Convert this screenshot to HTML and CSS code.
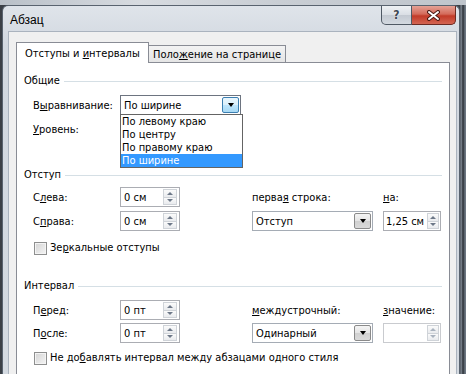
FILE: index.html
```html
<!DOCTYPE html>
<html lang="ru">
<head>
    <meta charset="UTF-8">
    <title>Абзац</title>
    <link rel="stylesheet" href="styles.css">
</head>
<body>
    <div class="desk-top"></div>

    <div class="window">
        <!-- Заголовок окна -->
        <div class="titlebar">
            <span class="title">Абзац</span>
            <span class="cap-help">?</span>
            <span class="cap-close"><svg width="13" height="11" viewBox="0 0 13 11"><path d="M2 2 L11 9 M11 2 L2 9" stroke="#4a1a14" stroke-width="4" stroke-linecap="round"/><path d="M2 2 L11 9 M11 2 L2 9" stroke="#ffffff" stroke-width="2" stroke-linecap="round"/></svg></span>
        </div>

        <div class="client">
            <div class="tabs">
                <div class="tab active">Отступы и <u>и</u>нтервалы</div>
                <div class="tab">Поло<u>ж</u>ение на странице</div>
            </div>

            <div class="panel">
                <!-- Общие -->
                <div class="group">
                    <div class="group-title">Общие</div>
                    <div class="rows">
                        <span class="lbl">В<u>ы</u>равнивание:</span>
                        <div class="combo focused">
                            <span>По ширине</span>
                            <div class="drop"><i class="arrow"></i></div>
                            <ul class="list">
                                <li>По левому краю</li>
                                <li>По центру</li>
                                <li>По правому краю</li>
                                <li class="sel">По ширине</li>
                            </ul>
                        </div>
                        <span class="lbl wide"><u>У</u>ровень:</span>
                    </div>
                </div>

                <!-- Отступ -->
                <div class="group indent">
                    <div class="group-title">Отступ</div>
                    <div class="rows">
                        <span class="lbl">С<u>л</u>ева:</span>
                        <div class="spin"><span>0 см</span><div class="spin-btns"><b class="up"></b><b class="down"></b></div></div>
                        <span class="lbl">перва<u>я</u> строка:</span>
                        <span class="lbl"><u>н</u>а:</span>

                        <span class="lbl">С<u>п</u>рава:</span>
                        <div class="spin"><span>0 см</span><div class="spin-btns"><b class="up"></b><b class="down"></b></div></div>
                        <div class="combo"><span>Отступ</span><div class="drop"><i class="arrow"></i></div></div>
                        <div class="spin narrow"><span>1,25 см</span><div class="spin-btns"><b class="up"></b><b class="down"></b></div></div>
                    </div>
                    <div class="check"><span class="box"></span><span>Зе<u>р</u>кальные отступы</span></div>
                </div>

                <!-- Интервал -->
                <div class="group interval">
                    <div class="group-title">Интервал</div>
                    <div class="rows">
                        <span class="lbl">П<u>е</u>ред:</span>
                        <div class="spin"><span>0 пт</span><div class="spin-btns"><b class="up"></b><b class="down"></b></div></div>
                        <span class="lbl"><u>м</u>еждустрочный:</span>
                        <span class="lbl"><u>з</u>начение:</span>

                        <span class="lbl">П<u>о</u>сле:</span>
                        <div class="spin"><span>0 пт</span><div class="spin-btns"><b class="up"></b><b class="down"></b></div></div>
                        <div class="combo"><span>Одинарный</span><div class="drop"><i class="arrow"></i></div></div>
                        <div class="spin narrow disabled"><span></span><div class="spin-btns"><b class="up"></b><b class="down"></b></div></div>
                    </div>
                    <div class="check"><span class="box"></span><span>Не до<u>б</u>авлять интервал между абзацами одного стиля</span></div>
                </div>
            </div>
        </div>
    </div>
</body>
</html>
```

FILE: styles.css
```css
body {
    margin: 0;
    width: 466px;
    height: 374px;
    overflow: hidden;
    background: linear-gradient(90deg, #3b4047 0, #3b4047 460px, #8a939e 461px, #2b3036 463px, #6c7681 465px);
    font-family: "DejaVu Sans Condensed", "DejaVu Sans", sans-serif;
    font-stretch: condensed;
    font-size: 11px;
    color: #000;
}

.desk-top {
    height: 5px;
    background: linear-gradient(90deg, #b9c0c8, #d7dbe0 30%, #c9ced4 60%, #bfc5cc);
}

.window {
    margin-left: 2px;
    width: 458px;
    height: 369px;
    box-sizing: border-box;
    border: 1px solid #59636f;
    border-bottom: none;
    border-radius: 6px 6px 0 0;
    background: linear-gradient(#dfe4ea, #d2d8e0 40px, #d4dae1);
    display: flex;
    flex-direction: column;
}

.titlebar {
    height: 25px;
    display: flex;
    align-items: flex-start;
    padding: 0 3px 0 7px;
}

.title {
    margin-top: 7px;
    margin-right: auto;
    line-height: 14px;
    font-family: "Liberation Sans", sans-serif;
    font-size: 12px;
}

.cap-help,
.cap-close {
    flex: none;
    box-sizing: border-box;
    height: 19px;
    border: 1px solid #4f5964;
    border-top: none;
    display: flex;
    align-items: center;
    justify-content: center;
}

.cap-help {
    width: 31px;
    border-radius: 0 0 0 5px;
    background: linear-gradient(#eef1f4, #d9dee4 50%, #c3c9d1 51%, #d3d9e0);
    font-family: "DejaVu Sans", sans-serif;
    font-weight: bold;
    font-size: 12px;
    color: #3d4650;
    text-shadow: 0 0 2px #fff;
}

.cap-close {
    width: 44px;
    border-left: none;
    border-color: #6b2a22;
    border-radius: 0 0 5px 0;
    background: #c94a39 linear-gradient(#e4a195, #d46a5a 45%, #c23a28 55%, #d36552);
}

.client {
    flex: 1;
    margin: 0 2px 0 5px;
    border: 1px solid #aab3be;
    border-bottom: none;
    background: #f0f0f0;
    padding: 10px 6px 0 7px;
    display: flex;
    flex-direction: column;
}

.tabs {
    display: flex;
    align-items: flex-end;
    height: 20px;
}

.tab {
    box-sizing: border-box;
    border: 1px solid #898c95;
    border-bottom: none;
    line-height: 15px;
    white-space: nowrap;
}

.tab.active {
    width: 133px;
    height: 21px;
    margin-bottom: -1px;
    padding: 3px 0 0 8px;
    background: #fff;
    position: relative;
    z-index: 1;
}

.tab:not(.active) {
    width: 137px;
    height: 17px;
    padding: 1px 0 0 4px;
    border-left: none;
    background: linear-gradient(#f3f3f3, #e5e5e5);
}

.panel {
    flex: 1;
    border: 1px solid #898c95;
    border-bottom: none;
    background: #fff;
    padding: 11px 7px 0 7px;
}

.group-title {
    display: flex;
    align-items: center;
    gap: 4px;
    line-height: 14px;
}

.group-title::after {
    content: "";
    flex: 1;
    height: 1px;
    background: #d5dfe5;
}

.rows {
    display: grid;
    grid-template-columns: 87px 132px 131px 58px;
    grid-auto-rows: 20px;
    row-gap: 4px;
    margin-left: 9px;
    align-items: center;
}

.group:first-child .rows {
    margin-top: 7px;
}

.lbl {
    white-space: nowrap;
}

.lbl.wide {
    grid-column: 1;
}

.indent {
    margin-top: 29px;
}

.indent .rows {
    margin-top: 5px;
}

.interval {
    margin-top: 24px;
}

.interval .rows {
    margin-top: 7px;
    row-gap: 3px;
}

.combo {
    position: relative;
    width: 121px;
    height: 20px;
    box-sizing: border-box;
    border: 1px solid #a5acb5;
    background: #fff;
    display: flex;
    align-items: center;
    padding-left: 3px;
}

.drop {
    align-self: stretch;
    width: 15px;
    margin: 1px 1px 1px auto;
    border: 1px solid #8a8a8a;
    border-radius: 2px;
    background: linear-gradient(#f4f4f4, #e4e4e4 50%, #d0d0d0 51%, #dadada);
    display: flex;
    align-items: center;
    justify-content: center;
}

.arrow {
    width: 0;
    height: 0;
    border-left: 3px solid transparent;
    border-right: 3px solid transparent;
    border-top: 4px solid #000;
}

.combo.focused {
    border-color: #6d7480;
}

.combo.focused .drop {
    border-color: #3c7fb1;
    background: linear-gradient(#eaf6fd, #d9f0fc 50%, #bee6fd 51%, #a7d9f5);
}

.list {
    position: absolute;
    left: -1px;
    top: 100%;
    width: 121px;
    margin: 0;
    padding: 0;
    list-style: none;
    border: 1px solid #646464;
    background: #fff;
    z-index: 2;
}

.list li {
    height: 13px;
    line-height: 13px;
    padding-left: 1px;
}

.list li.sel {
    background: #3399ff;
    color: #fff;
}

.spin {
    width: 60px;
    height: 20px;
    box-sizing: border-box;
    border: 1px solid #abadb3;
    background: #fff;
    display: flex;
    align-items: center;
    padding-left: 3px;
}

.spin span {
    white-space: nowrap;
}

.spin.narrow {
    width: 58px;
    padding-left: 2px;
}

.spin-btns {
    margin: 1px 2px 1px auto;
    align-self: stretch;
    width: 14px;
    flex-shrink: 0;
    display: flex;
    flex-direction: column;
}

.spin.narrow .spin-btns {
    width: 12px;
    margin-right: 1px;
}

.spin-btns b {
    flex: 1;
    border: 1px solid #cfd3d8;
    background: linear-gradient(#fbfbfb, #e9ebee);
    display: flex;
    align-items: center;
    justify-content: center;
}

.spin-btns b::before {
    content: "";
    border-left: 3px solid transparent;
    border-right: 3px solid transparent;
}

.spin-btns .up::before {
    border-bottom: 3px solid #6d7888;
}

.spin-btns .down {
    border-top: none;
}

.spin-btns .down::before {
    border-top: 3px solid #6d7888;
}

.spin.disabled {
    border-color: #c9cbcf;
}

.spin.disabled .spin-btns .up::before {
    border-bottom-color: #aab3bf;
}

.spin.disabled .spin-btns .down::before {
    border-top-color: #aab3bf;
}

.check {
    display: flex;
    align-items: center;
    gap: 3px;
    margin: 10px 0 0 10px;
    line-height: 14px;
    white-space: nowrap;
}

.box {
    flex-shrink: 0;
    width: 11px;
    height: 11px;
    border: 1px solid #8e8f8f;
    background: linear-gradient(135deg, #d4d4d4, #f4f4f4);
    box-shadow: inset 0 0 0 1px #f4f4f4;
}

.interval .check {
    margin-top: 8px;
}
```
